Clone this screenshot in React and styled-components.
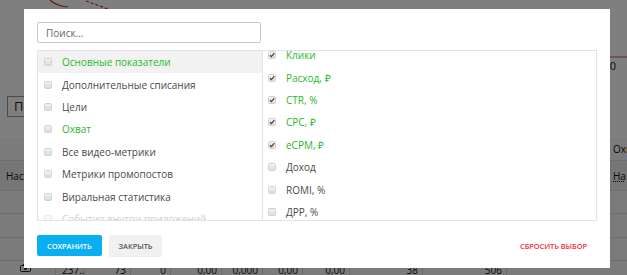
import React from "react";
import styled, { createGlobalStyle } from "styled-components";

const Global = createGlobalStyle`
  html, body { margin: 0; padding: 0; }
  body { width: 627px; height: 275px; overflow: hidden; font-family: "Open Sans", "Liberation Sans", sans-serif; background: #fff; }
  * { box-sizing: border-box; }
`;

/* ---------- background page ---------- */
const Page = styled.div`
  position: relative;
  width: 627px;
  height: 275px;
  overflow: hidden;
  background: #fff;
  display: flex;
  flex-direction: column;
`;
const ChartArea = styled.div`
  height: 88px;
  flex: none;
  position: relative;
  display: flex;
  justify-content: flex-end;
  align-items: flex-start;
  padding: 58px 11px 0 0;
  font-size: 11px;
  color: #111;
`;
const ChartSvg = styled.svg`
  position: absolute;
  left: 0;
  top: 0;
`;
const Toolbar = styled.div`
  height: 50px;
  flex: none;
  padding: 8px 0 0 7px;
`;
const GhostButton = styled.div`
  width: 60px;
  height: 21px;
  border: 1px solid #999;
  font-size: 13px;
  color: #222;
  padding: 0 6px;
  line-height: 19px;
`;
const Table = styled.div`
  flex: none;
  background: #f6f6f6;
  display: flex;
  flex-direction: column;
`;
const TRow = styled.div`
  height: ${(p) => p.$h}px;
  flex: none;
  border-bottom: 1px solid #dcdcdc;
  background: ${(p) => (p.$head ? "#ececec" : "transparent")};
  display: flex;
  justify-content: space-between;
  align-items: ${(p) => (p.$top ? "flex-start" : "center")};
  padding: 0 0 0 6px;
  font-size: 10px;
  color: #111;
`;
const RightCell = styled.div`
  width: 14px;
  padding-top: ${(p) => p.$pt || 0}px;
  text-decoration: ${(p) => (p.$u ? "underline dotted" : "none")};
  overflow: hidden;
  white-space: nowrap;
`;
const DataRow = styled.div`
  display: grid;
  flex: none;
  grid-template-columns: 56px 29px 46px 40px 51px 41px 40px 47px 73px 84px 1fr;
  font-size: 10px;
  color: #111;
  height: 20px;
  line-height: 12px;
`;
const DCell = styled.div`
  padding: 3px 4px 0 ${(p) => (p.$a === "left" ? 6 : 0)}px;
  border-right: ${(p) => (p.$last ? "none" : "1px solid #d6d6d6")};
  height: 20px;
  white-space: nowrap;
  overflow: hidden;
  display: flex;
  justify-content: ${(p) => (p.$a === "center" ? "center" : p.$a === "left" ? "flex-start" : "flex-end")};
`;

const Overlay = styled.div`
  position: absolute;
  inset: 0;
  background: rgba(0, 0, 0, 0.5);
`;

/* ---------- modal ---------- */
const Modal = styled.div`
  position: absolute;
  left: 24px;
  top: 9px;
  width: 586px;
  height: 259px;
  background: #fff;
  padding: 13px 13px 12px 13px;
  display: flex;
  flex-direction: column;
`;
const Search = styled.input`
  width: 224px;
  height: 21px;
  border: 1px solid #c8c8c8;
  border-radius: 2px;
  padding: 0 8px;
  font-family: "Open Sans", "Liberation Sans", sans-serif;
  font-size: 10px;
  color: #555;
  outline: none;
  &::placeholder { color: #666; }
`;
const Lists = styled.div`
  margin-top: 7px;
  width: 560px;
  height: 171px;
  border: 1px solid #e3e3e3;
  display: grid;
  grid-template-columns: 225px 1fr;
  overflow: hidden;
`;
const Column = styled.div`
  border-right: ${(p) => (p.$divider ? "1px solid #e3e3e3" : "none")};
  overflow: hidden;
`;
const ColInner = styled.div`
  margin-top: ${(p) => p.$shift || 0}px;
`;
const Item = styled.div`
  height: 22.4px;
  display: flex;
  align-items: center;
  gap: 10px;
  padding-left: ${(p) => p.$pl}px;
  background: ${(p) => (p.$active ? "#f2f2f2" : "transparent")};
  font-size: 10px;
  white-space: nowrap;
  color: ${(p) => (p.$green ? "#1fba1f" : p.$faded ? "#cfcfcf" : "#4a4a4a")};
`;
const Box = styled.span`
  width: 8px;
  height: 8px;
  flex: none;
  border: 1px solid ${(p) => (p.$faded ? "#ececec" : "#d2d2d2")};
  border-radius: 1.5px;
  background: ${(p) => (p.$faded ? "#f8f8f8" : "linear-gradient(#f2f2f2, #dcdcdc)")};
  position: relative;
`;
const Footer = styled.div`
  margin-top: 14px;
  display: flex;
  align-items: center;
  gap: 7px;
`;
const Btn = styled.button`
  height: 21px;
  border: none;
  border-radius: 2px;
  padding: 0 ${(p) => p.$px}px;
  font-family: "Open Sans", "Liberation Sans", sans-serif;
  font-size: 7.5px;
  font-weight: 600;
  letter-spacing: -0.1px;
  text-transform: uppercase;
  background: ${(p) => (p.$primary ? "#0aaff2" : "#f1f1f1")};
  color: ${(p) => (p.$primary ? "#fff" : "#555")};
  box-shadow: ${(p) => (p.$primary ? "none" : "0 1px 1px rgba(0,0,0,0.08)")};
`;
const ResetBtn = styled.button`
  margin-left: auto;
  margin-right: 4px;
  border: none;
  background: transparent;
  font-family: "Open Sans", "Liberation Sans", sans-serif;
  font-size: 7.5px;
  font-weight: 600;
  letter-spacing: -0.1px;
  color: #f0303a;
  text-transform: uppercase;
`;

const Check = ({ checked, faded }) => (
  <Box $faded={faded}>
    {checked && (
      <svg width="8" height="8" viewBox="0 0 8 8" style={{ position: "absolute", left: -1, top: -1 }}>
        <path d="M2 4.2 L3.4 5.6 L6.3 2.2" stroke="#3a3a3a" strokeWidth="1.1" fill="none" />
      </svg>
    )}
  </Box>
);

const left = [
  { t: "Основные показатели", g: true, a: true },
  { t: "Дополнительные списания" },
  { t: "Цели" },
  { t: "Охват", g: true },
  { t: "Все видео-метрики" },
  { t: "Метрики промопостов" },
  { t: "Виральная статистика" },
  { t: "События внутри приложений", f: true },
];
const right = [
  { t: "Клики", c: true },
  { t: "Расход, ₽", c: true },
  { t: "CTR, %", c: true },
  { t: "CPC, ₽", c: true },
  { t: "eCPM, ₽", c: true },
  { t: "Доход" },
  { t: "ROMI, %" },
  { t: "ДРР, %" },
];

const data = ["237...", "73", "0", "0,00", "0,000", "0,00", "0,00", "38", "506"];

export default function App() {
  return (
    <>
      <Global />
      <Page>
        <ChartArea>
          <ChartSvg width="627" height="88">
            <path d="M50 0 Q56 6 68 7" stroke="#c0302a" strokeWidth="1.2" fill="none" />
            <path d="M86 1 L108 9" stroke="#c0302a" strokeWidth="1.2" strokeDasharray="3 2" fill="none" />
            <path d="M600 57 L627 57" stroke="#d04040" strokeWidth="1" fill="none" />
          </ChartSvg>
          <span>0</span>
        </ChartArea>
        <Toolbar>
          <GhostButton>По</GhostButton>
        </Toolbar>
        <Table>
          <TRow $h={23} $top>
            <span />
            <RightCell $pt={4}>Охват</RightCell>
          </TRow>
          <TRow $h={30} $head>
            <span>Настройки</span>
            <RightCell $u>На</RightCell>
          </TRow>
          <TRow $h={23} />
          <TRow $h={24} />
          <TRow $h={23} />
          <DataRow>
            <DCell $a="center">
              <svg width="11" height="8" viewBox="0 0 11 8">
                <rect x="0.5" y="1.5" width="10" height="6" rx="1" fill="none" stroke="#222" />
                <rect x="3" y="0" width="5" height="2" fill="#222" />
                <circle cx="5.5" cy="4.5" r="1.5" fill="#222" />
              </svg>
            </DCell>
            {data.map((d, i) => (
              <DCell key={i} $a={i === 0 ? "left" : undefined}>{d}</DCell>
            ))}
            <DCell $last />
          </DataRow>
        </Table>
        <Overlay />
        <Modal>
          <Search placeholder="Поиск..." />
          <Lists>
            <Column $divider>
              <ColInner>
                {left.map((it) => (
                  <Item key={it.t} $pl={6} $green={it.g} $active={it.a} $faded={it.f}>
                    <Check faded={it.f} />
                    {it.t}
                  </Item>
                ))}
              </ColInner>
            </Column>
            <Column>
              <ColInner $shift={-7}>
                {right.map((it) => (
                  <Item key={it.t} $pl={5} $green={it.c}>
                    <Check checked={it.c} />
                    {it.t}
                  </Item>
                ))}
              </ColInner>
            </Column>
          </Lists>
          <Footer>
            <Btn $primary $px={10}>Сохранить</Btn>
            <Btn $px={10}>Закрыть</Btn>
            <ResetBtn>Сбросить выбор</ResetBtn>
          </Footer>
        </Modal>
      </Page>
    </>
  );
}
